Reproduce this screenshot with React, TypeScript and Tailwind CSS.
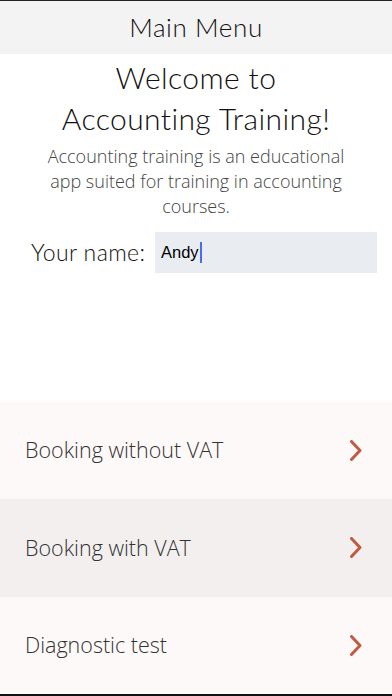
import React from "react";

const items = [
  { label: "Booking without VAT", bg: "bg-[#fcf9f8]" },
  { label: "Booking with VAT", bg: "bg-[#f2efee]" },
  { label: "Diagnostic test", bg: "bg-[#fcf9f8]" },
];

const Chevron = () => (
  <svg viewBox="0 0 12 21" className="h-[21px] w-[12px]" fill="none">
    <path
      d="M1.5 1.5L10 10.5L1.5 19.5"
      stroke="#c25a42"
      strokeWidth={3}
      strokeLinecap="round"
      strokeLinejoin="round"
    />
  </svg>
);

export default function App() {
  return (
    <div className="flex h-[696px] w-[392px] flex-col border-t border-b-2 border-t-[#222] border-b-[#111] bg-white">
      <div className="flex h-[53px] items-center justify-center bg-[#f3f3f3] font-['Lato',sans-serif] text-[26px] font-light tracking-[0.6px] text-[#111]">
        Main Menu
      </div>

      <div className="flex flex-col items-center pt-[3px] text-center">
        <h1 className="font-['Lato',sans-serif] text-[30px] leading-[41px] font-light tracking-[0.4px] text-[#111]">
          Welcome to
          <br />
          Accounting Training!
        </h1>
        <p className="mt-[5px] px-[40px] font-['Open_Sans',sans-serif] text-[18px] leading-[25px] font-light text-[#444]">
          Accounting training is an educational app suited for training in
          accounting courses.
        </p>
      </div>

      <div className="mt-[13px] flex items-center pr-[15px] pl-[31px]">
        <label className="w-[124px] font-['Lato',sans-serif] text-[23px] font-light tracking-[0.4px] text-[#111]">
          Your name:
        </label>
        <div className="flex h-[41px] flex-1 items-center bg-[#e9edf2] pl-[6px] font-['Liberation_Sans',sans-serif] text-[16.5px] text-black">
          Andy
          <span className="ml-[1px] h-[21px] w-[2px] bg-[#4a6cf0]" />
        </div>
      </div>

      <div className="mt-auto flex flex-col">
        {items.map((item) => (
          <div
            key={item.label}
            className={`flex h-[97.5px] items-center justify-between pr-[30px] pl-[25px] ${item.bg}`}
          >
            <span className="font-['Open_Sans',sans-serif] text-[21.5px] font-light text-[#333]">
              {item.label}
            </span>
            <Chevron />
          </div>
        ))}
      </div>
    </div>
  );
}
